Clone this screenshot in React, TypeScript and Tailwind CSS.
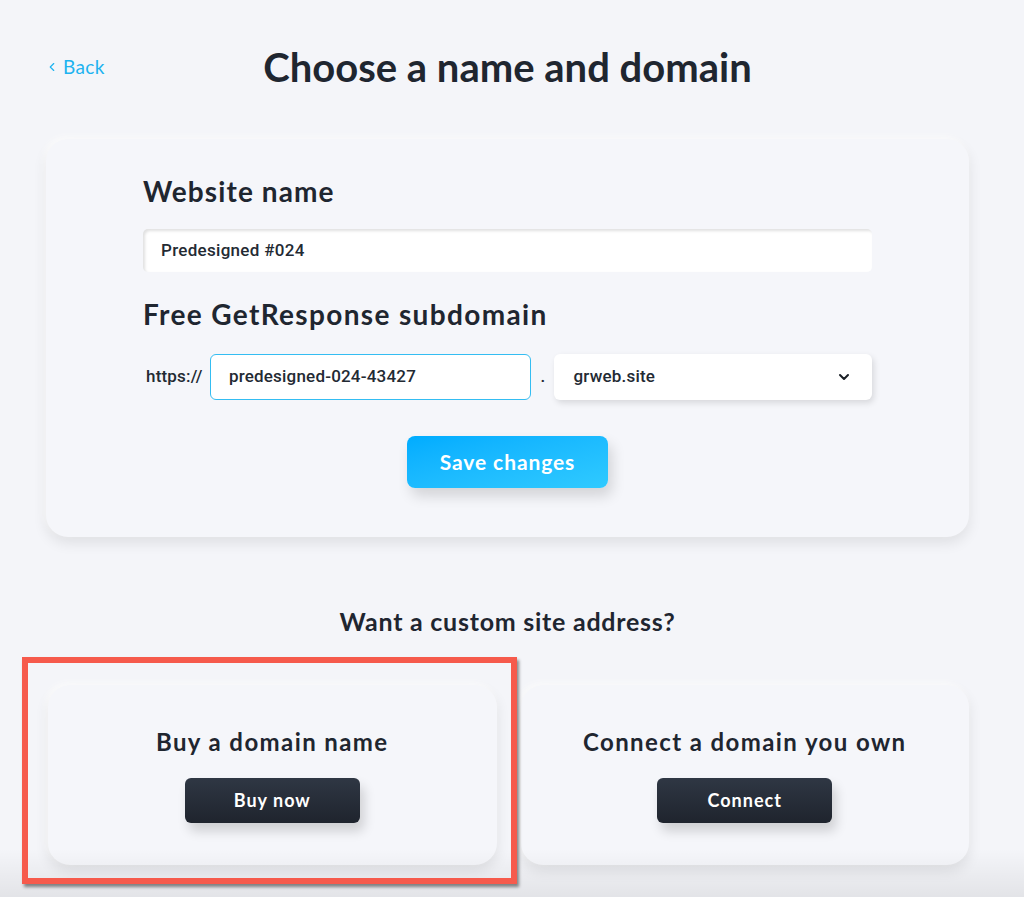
import { ChevronDown, ChevronLeft } from "lucide-react";

const heading = "font-['Lato','Open_Sans',sans-serif] font-bold";
const dark = "text-[#1f2630]";
const body = "font-['Roboto','Liberation_Sans',sans-serif]";

export default function App() {
  return (
    <div className="relative min-h-[897px] w-full overflow-hidden bg-[#f4f5f9]">
      <div className="ml-[46px] w-[923px] pt-[44px]">
        {/* header */}
        <div className="grid grid-cols-[1fr_auto_1fr] items-center">
          <a className={`${heading} -ml-[1px] flex items-center gap-[4px] text-[19px] font-normal tracking-[0.4px] text-[#1db3f0]`}>
            <ChevronLeft className="h-[14px] w-[14px]" strokeWidth={2} />
            Back
          </a>
          <h1 className={`${heading} ${dark} text-[40px] leading-[46px]`}>Choose a name and domain</h1>
          <div />
        </div>

        {/* main card */}
        <section className="mt-[49px] rounded-[22px] bg-[#f5f6fa] px-[97px] pb-[49px] pt-[35px] shadow-[0_6px_14px_rgba(0,0,0,0.09),-2px_-2px_6px_rgba(255,255,255,0.9)]">
          <h2 className={`${heading} ${dark} text-[28px] leading-[34px] tracking-[1.1px]`}>Website name</h2>
          <div className={`${body} mt-[21px] flex h-[43px] items-center rounded-[5px] bg-white px-[18px] text-[17px] font-medium tracking-[0.3px] text-[#232a33] shadow-[inset_2px_2px_3px_rgba(0,0,0,0.12)]`}>
            Predesigned #024
          </div>

          <h2 className={`${heading} ${dark} mt-[25px] text-[28px] leading-[34px] tracking-[1.35px]`}>Free GetResponse subdomain</h2>
          <div className={`${body} mt-[23px] flex items-center text-[17px] tracking-[0.2px] text-[#232a33]`}>
            <span className="w-[67px] pl-[3px] font-medium">https://</span>
            <div className="flex h-[46px] w-[322px] items-center rounded-[6px] border border-[#34bdf2] bg-white px-[18px] font-medium">
              predesigned-024-43427
            </div>
            <span className="w-[23px] text-center font-medium">.</span>
            <div className="flex h-[46px] w-[318px] items-center justify-between rounded-[6px] bg-white pl-[19px] pr-[20px] font-medium shadow-[2px_3px_6px_rgba(0,0,0,0.12)]">
              grweb.site
              <ChevronDown className="h-[16px] w-[16px] text-[#1a1f26]" strokeWidth={3} />
            </div>
          </div>

          <div className="mt-[36px] flex justify-center">
            <button className={`${heading} h-[52px] w-[201px] rounded-[8px] bg-gradient-to-br from-[#00acff] to-[#2fcaff] text-[21px] tracking-[0.9px] text-white shadow-[4px_8px_14px_rgba(0,0,0,0.14)]`}>
              Save changes
            </button>
          </div>
        </section>

        <h3 className={`${heading} ${dark} mt-[69px] text-center text-[25px] leading-[30px] tracking-[0.75px]`}>Want a custom site address?</h3>

        {/* option cards */}
        <div className="mt-[49px] grid grid-cols-2 gap-[24px] pl-[2px]">
          {[
            { title: "Buy a domain name", action: "Buy now" },
            { title: "Connect a domain you own", action: "Connect" },
          ].map((o) => (
            <div
              key={o.title}
              className="flex h-[180px] flex-col items-center rounded-[22px] bg-[#f5f6fa] pt-[42px] shadow-[0_6px_14px_rgba(0,0,0,0.09),-2px_-2px_6px_rgba(255,255,255,0.9)]"
            >
              <h4 className={`${heading} ${dark} text-[24px] leading-[30px] tracking-[1.4px]`}>{o.title}</h4>
              <button className={`${heading} mt-[21px] h-[45px] w-[175px] rounded-[6px] bg-gradient-to-b from-[#2f3744] to-[#1f242d] text-[18px] tracking-[1px] text-white shadow-[4px_8px_12px_rgba(0,0,0,0.16)]`}>
                {o.action}
              </button>
            </div>
          ))}
        </div>
      </div>

      {/* bottom fade */}
      <div className="pointer-events-none absolute bottom-0 left-0 h-[48px] w-full bg-gradient-to-b from-transparent to-[rgba(0,0,0,0.07)]" />

      {/* annotation box */}
      <div className="pointer-events-none absolute left-[22px] top-[657px] h-[227px] w-[495px] border-[6px] border-[#f65a4c] shadow-[2px_3px_3px_rgba(0,0,0,0.45)]" />
    </div>
  );
}
